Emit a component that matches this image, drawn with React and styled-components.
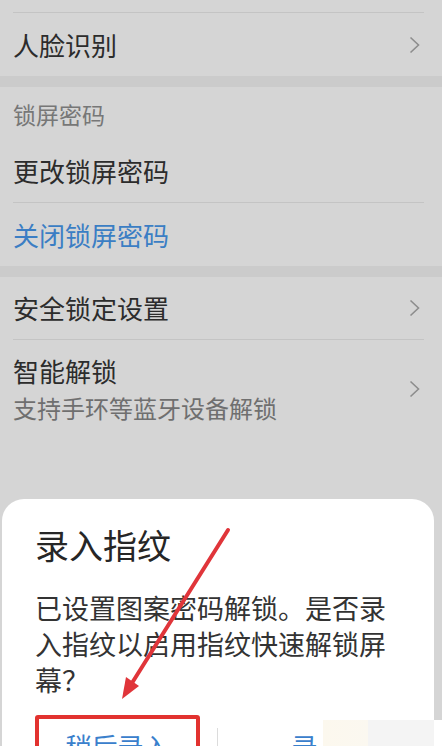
import React from "react";
import styled, { createGlobalStyle } from "styled-components";

const GlobalStyle = createGlobalStyle`
  html, body {
    margin: 0;
    padding: 0;
    background: #d5d5d5;
  }
  * {
    box-sizing: border-box;
  }
`;

const Screen = styled.div`
  position: relative;
  width: 442px;
  height: 746px;
  overflow: hidden;
  background: #d5d5d5;
  font-family: "Noto Sans CJK SC", "Noto Sans", sans-serif;
  display: flex;
  flex-direction: column;
`;

const Divider = styled.div`
  flex-shrink: 0;
  height: 1px;
  background: #c4c4c4;
  margin: ${(p) => (p.$top ? `${p.$top}px` : "0")} 18px 0 13px;
`;

const Band = styled.div`
  flex-shrink: 0;
  height: 11px;
  background: #cbcbcb;
`;

const SectionHeader = styled.div`
  flex-shrink: 0;
  height: 53px;
  padding: 0 13px;
  display: flex;
  align-items: center;
  font-size: 23px;
  color: #777;
`;

const Row = styled.div`
  flex-shrink: 0;
  display: flex;
  align-items: center;
  justify-content: space-between;
  min-height: ${(p) => p.$h || 62}px;
  padding: ${(p) => (p.$tall ? "14px 22px 14px 13px" : "0 22px 0 13px")};
`;

const TextStack = styled.div`
  display: flex;
  flex-direction: column;
`;

const Label = styled.span`
  font-size: 26px;
  line-height: 34px;
  color: ${(p) => (p.$blue ? "#3b7ec4" : "#2c2c2c")};
`;

const SubLabel = styled.span`
  margin-top: 4px;
  font-size: 24px;
  line-height: 32px;
  color: #6f6f6f;
`;

const Chevron = () => (
  <svg width="11" height="18" viewBox="0 0 11 18">
    <polyline
      points="1.5,1.5 9.5,9 1.5,16.5"
      fill="none"
      stroke="#8d8d8d"
      strokeWidth="1.6"
    />
  </svg>
);

const Dialog = styled.div`
  flex-shrink: 0;
  margin: 61px 0 0 2px;
  width: 432px;
  background: #fff;
  border-radius: 22px 22px 0 0;
  padding: 23px 17px 0 33px;
`;

const DialogTitle = styled.div`
  font-size: 34px;
  line-height: 46px;
  color: #262626;
`;

const DialogBody = styled.div`
  margin-top: 22px;
  max-width: 360px;
  font-size: 27px;
  line-height: 36px;
  color: #333;
`;

const ButtonRow = styled.div`
  display: flex;
  width: 399px;
  margin: 17px 0 0 -17px;
`;

const DialogButton = styled.div`
  position: relative;
  flex: 1;
  height: 60px;
  display: flex;
  align-items: center;
  justify-content: center;
  font-size: 26px;
  color: #3a80cc;
`;

const ButtonDivider = styled.div`
  width: 1px;
  height: 47px;
  margin-top: 13px;
  background: #dcdcdc;
`;

const Highlight = styled.div`
  position: absolute;
  top: 0;
  left: 17px;
  width: 165px;
  height: 64px;
  border: 4px solid #e2322f;
  border-radius: 3px;
`;

const Watermark = styled.div`
  position: absolute;
  left: 323px;
  top: 720px;
  width: 119px;
  height: 26px;
  background: linear-gradient(
    to right,
    #fcf8ee 0%,
    #fbf8f0 38%,
    #f4f4f4 38%,
    #f4f4f4 93%,
    #ffffff 93%
  );
`;

const ArrowLayer = styled.svg`
  position: absolute;
  top: 0;
  left: 0;
  pointer-events: none;
`;

const Arrow = () => (
  <ArrowLayer width="442" height="746" viewBox="0 0 442 746">
    <line
      x1="228"
      y1="530"
      x2="132"
      y2="683"
      stroke="#e0353a"
      strokeWidth="4"
      strokeLinecap="round"
    />
    <polygon points="122,699 139,686 126,677" fill="#e0353a" />
  </ArrowLayer>
);

export default function App() {
  return (
    <>
      <GlobalStyle />
      <Screen>
        <Divider $top={12} />
        <Row $h={63}>
          <Label>人脸识别</Label>
          <Chevron />
        </Row>
        <Band />
        <SectionHeader>锁屏密码</SectionHeader>
        <Row>
          <Label>更改锁屏密码</Label>
        </Row>
        <Divider />
        <Row $h={63}>
          <Label $blue>关闭锁屏密码</Label>
        </Row>
        <Band />
        <Row>
          <Label>安全锁定设置</Label>
          <Chevron />
        </Row>
        <Divider />
        <Row $tall>
          <TextStack>
            <Label>智能解锁</Label>
            <SubLabel>支持手环等蓝牙设备解锁</SubLabel>
          </TextStack>
          <Chevron />
        </Row>
        <Dialog>
          <DialogTitle>录入指纹</DialogTitle>
          <DialogBody>
            已设置图案密码解锁。是否录入指纹以启用指纹快速解锁屏幕？
          </DialogBody>
          <ButtonRow>
            <DialogButton>
              稍后录入
              <Highlight />
            </DialogButton>
            <ButtonDivider />
            <DialogButton>录入</DialogButton>
          </ButtonRow>
        </Dialog>
        <Watermark />
        <Arrow />
      </Screen>
    </>
  );
}
